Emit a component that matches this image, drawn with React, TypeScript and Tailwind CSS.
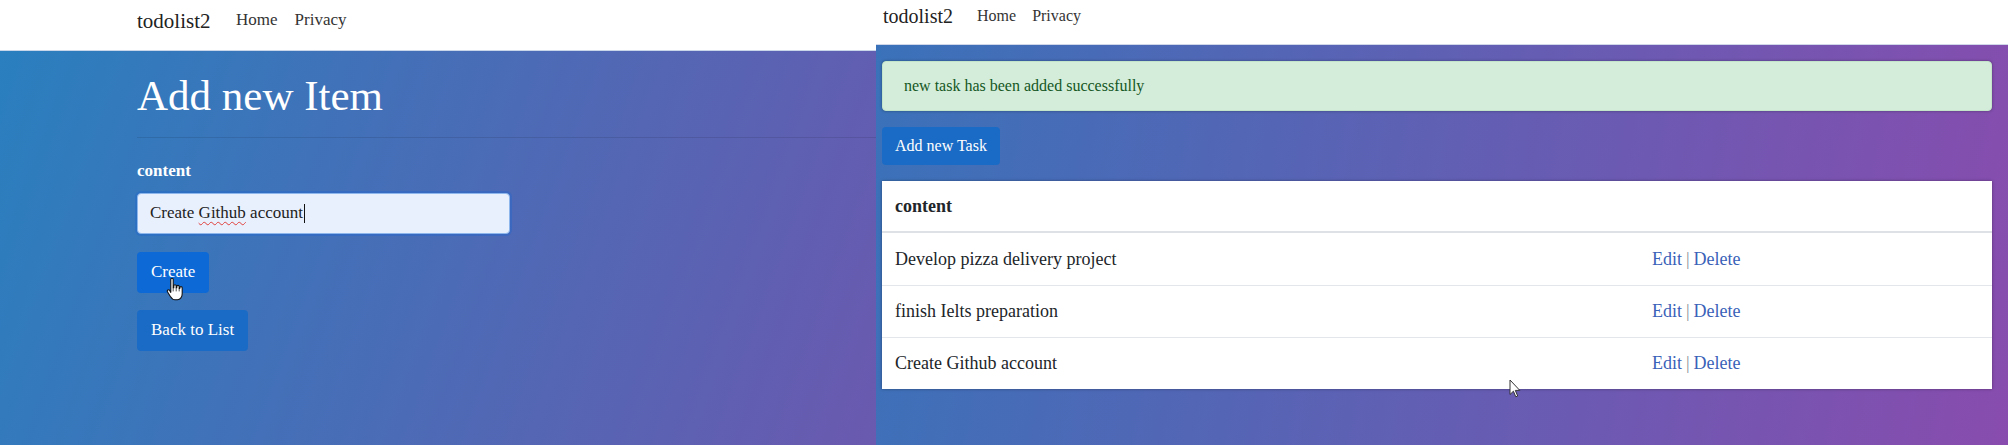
import React from 'react'

const ROWS = ['Develop pizza delivery project', 'finish Ielts preparation', 'Create Github account']

function HandCursor({ className }: { className?: string }) {
  return (
    <svg className={className} width="18" height="24" viewBox="0 0 15 20" fill="none">
      <path
        d="M5 1C5.55 1 6 1.45 6 2V9H6.5V7.5C6.5 6.95 6.95 6.5 7.5 6.5C8.05 6.5 8.5 6.95 8.5 7.5V9H9V8C9 7.45 9.45 7 10 7C10.55 7 11 7.45 11 8V9.5H11.5V9C11.5 8.45 11.95 8 12.5 8C13.05 8 13.5 8.45 13.5 9V14C13.5 16.5 12 19 9.5 19H7.5C5.5 19 4.5 17.5 3.5 16L1.2 12.3C0.9 11.8 1.05 11.15 1.55 10.85C2.05 10.55 2.7 10.7 3 11.2L4 12.8V2C4 1.45 4.45 1 5 1Z"
        fill="#fff"
        stroke="#111"
        strokeWidth="0.9"
        strokeLinejoin="round"
      />
      <path d="M6 9V12M8.5 9V12M11 9.5V12" stroke="#111" strokeWidth="0.6" />
    </svg>
  )
}

function ArrowCursor({ className }: { className?: string }) {
  return (
    <svg className={className} width="12" height="19" viewBox="0 0 12 19" fill="none">
      <path d="M1 1V15.5L4.4 12.2L6.8 17.8L8.7 17L6.3 11.4H10.8Z" fill="#fff" stroke="#333" strokeWidth="1" strokeLinejoin="round" />
    </svg>
  )
}

function CreatePage() {
  return (
    <section className="relative w-[876px] shrink-0 h-full flex flex-col">
      <nav className="h-[51px] bg-white border-b border-[#c9d6ea] pl-[137px] flex items-start">
        <a className="mt-[5px] mr-[17px] text-[21px] leading-[32px] text-[#222]">todolist2</a>
        <a className="mt-[7px] px-[8.5px] text-[17px] leading-[25.5px] text-[#333]">Home</a>
        <a className="mt-[7px] px-[8.5px] text-[17px] leading-[25.5px] text-[#333]">Privacy</a>
      </nav>
      <main className="flex-1 bg-[linear-gradient(110deg,#2a7fbe,#6a59af)] pl-[137px] flex flex-col items-start">
        <h1 className="mt-[20px] text-[43px] leading-[50px] text-white">Add new Item</h1>
        <div className="mt-[16px] h-px self-stretch bg-black/10" />
        <label className="mt-[20px] text-[17px] leading-[25.5px] font-bold text-white">content</label>
        <div
          role="textbox"
          className="mt-[9px] w-[373px] h-[41px] rounded-[4px] bg-[#e8f0fe] border border-[#8cb6ec] shadow-[0_0_0_2px_rgba(30,100,210,0.35)] pl-[12px] flex items-center text-[17px] text-[#222]"
        >
          Create&nbsp;
          <span className="underline decoration-wavy decoration-[#e0403a] decoration-1 underline-offset-[3px]">Github</span>
          &nbsp;account
          <span className="ml-px w-px h-[19px] bg-[#111]" />
        </div>
        <button className="mt-[18px] h-[41px] px-[14px] rounded-[4px] bg-[#0c69d6] text-white text-[17px]">Create</button>
        <button className="mt-[17px] h-[41px] px-[14px] rounded-[4px] bg-[#1a6bc5] text-white text-[17px]">Back to List</button>
      </main>
      <HandCursor className="absolute left-[166px] top-[277px]" />
    </section>
  )
}

function ListPage() {
  return (
    <section className="relative flex-1 h-full flex flex-col">
      <nav className="h-[45px] bg-white border-b border-[#cfd7e8] pl-[7px] flex items-start">
        <a className="mt-[1px] mr-[16px] text-[20px] leading-[30px] text-[#222]">todolist2</a>
        <a className="mt-[4px] px-[8px] text-[16px] leading-[24px] text-[#333]">Home</a>
        <a className="mt-[4px] px-[8px] text-[16px] leading-[24px] text-[#333]">Privacy</a>
      </nav>
      <main className="flex-1 bg-[linear-gradient(100deg,#3a72b9,#884cae)] pl-[6px] pr-[16px] pt-[16px] flex flex-col items-start">
        <div className="self-stretch h-[50px] rounded-[4px] bg-[#d4edda] border border-[#c3e6cb] shadow-[0_0_3px_rgba(0,0,0,0.35)] px-[21px] flex items-center text-[16px] text-[#155724]">
          new task has been added successfully
        </div>
        <button className="mt-[16px] h-[38px] px-[13px] rounded-[4px] bg-[#1a6bc5] text-white text-[16px]">Add new Task</button>
        <div className="mt-[16px] self-stretch bg-white shadow-[0_0_3px_rgba(0,0,0,0.35)] grid grid-cols-[758px_1fr] text-[18px] text-[#212529]">
          <div className="h-[52px] border-b-2 border-[#dee2e6] pl-[13px] flex items-center font-bold">content</div>
          <div className="h-[52px] border-b-2 border-[#dee2e6]" />
          {ROWS.map((row, i) => (
            <React.Fragment key={row}>
              <div className={i > 0 ? 'h-[52px] border-t border-[#e3e6ea] pl-[13px] flex items-center' : 'h-[52px] pl-[13px] flex items-center'}>
                {row}
              </div>
              <div className={i > 0 ? 'h-[52px] border-t border-[#e3e6ea] pl-[12px] flex items-center' : 'h-[52px] pl-[12px] flex items-center'}>
                <a className="text-[#3a62b8]">Edit</a>
                <span className="mx-[4px] text-[#8a8f98]">|</span>
                <a className="text-[#3a62b8]">Delete</a>
              </div>
            </React.Fragment>
          ))}
        </div>
      </main>
      <ArrowCursor className="absolute left-[633px] top-[379px]" />
    </section>
  )
}

export default function App() {
  return (
    <div className="flex w-[2008px] h-[445px] overflow-hidden [font-family:'Liberation_Serif','Times_New_Roman',serif]">
      <CreatePage />
      <ListPage />
    </div>
  )
}
